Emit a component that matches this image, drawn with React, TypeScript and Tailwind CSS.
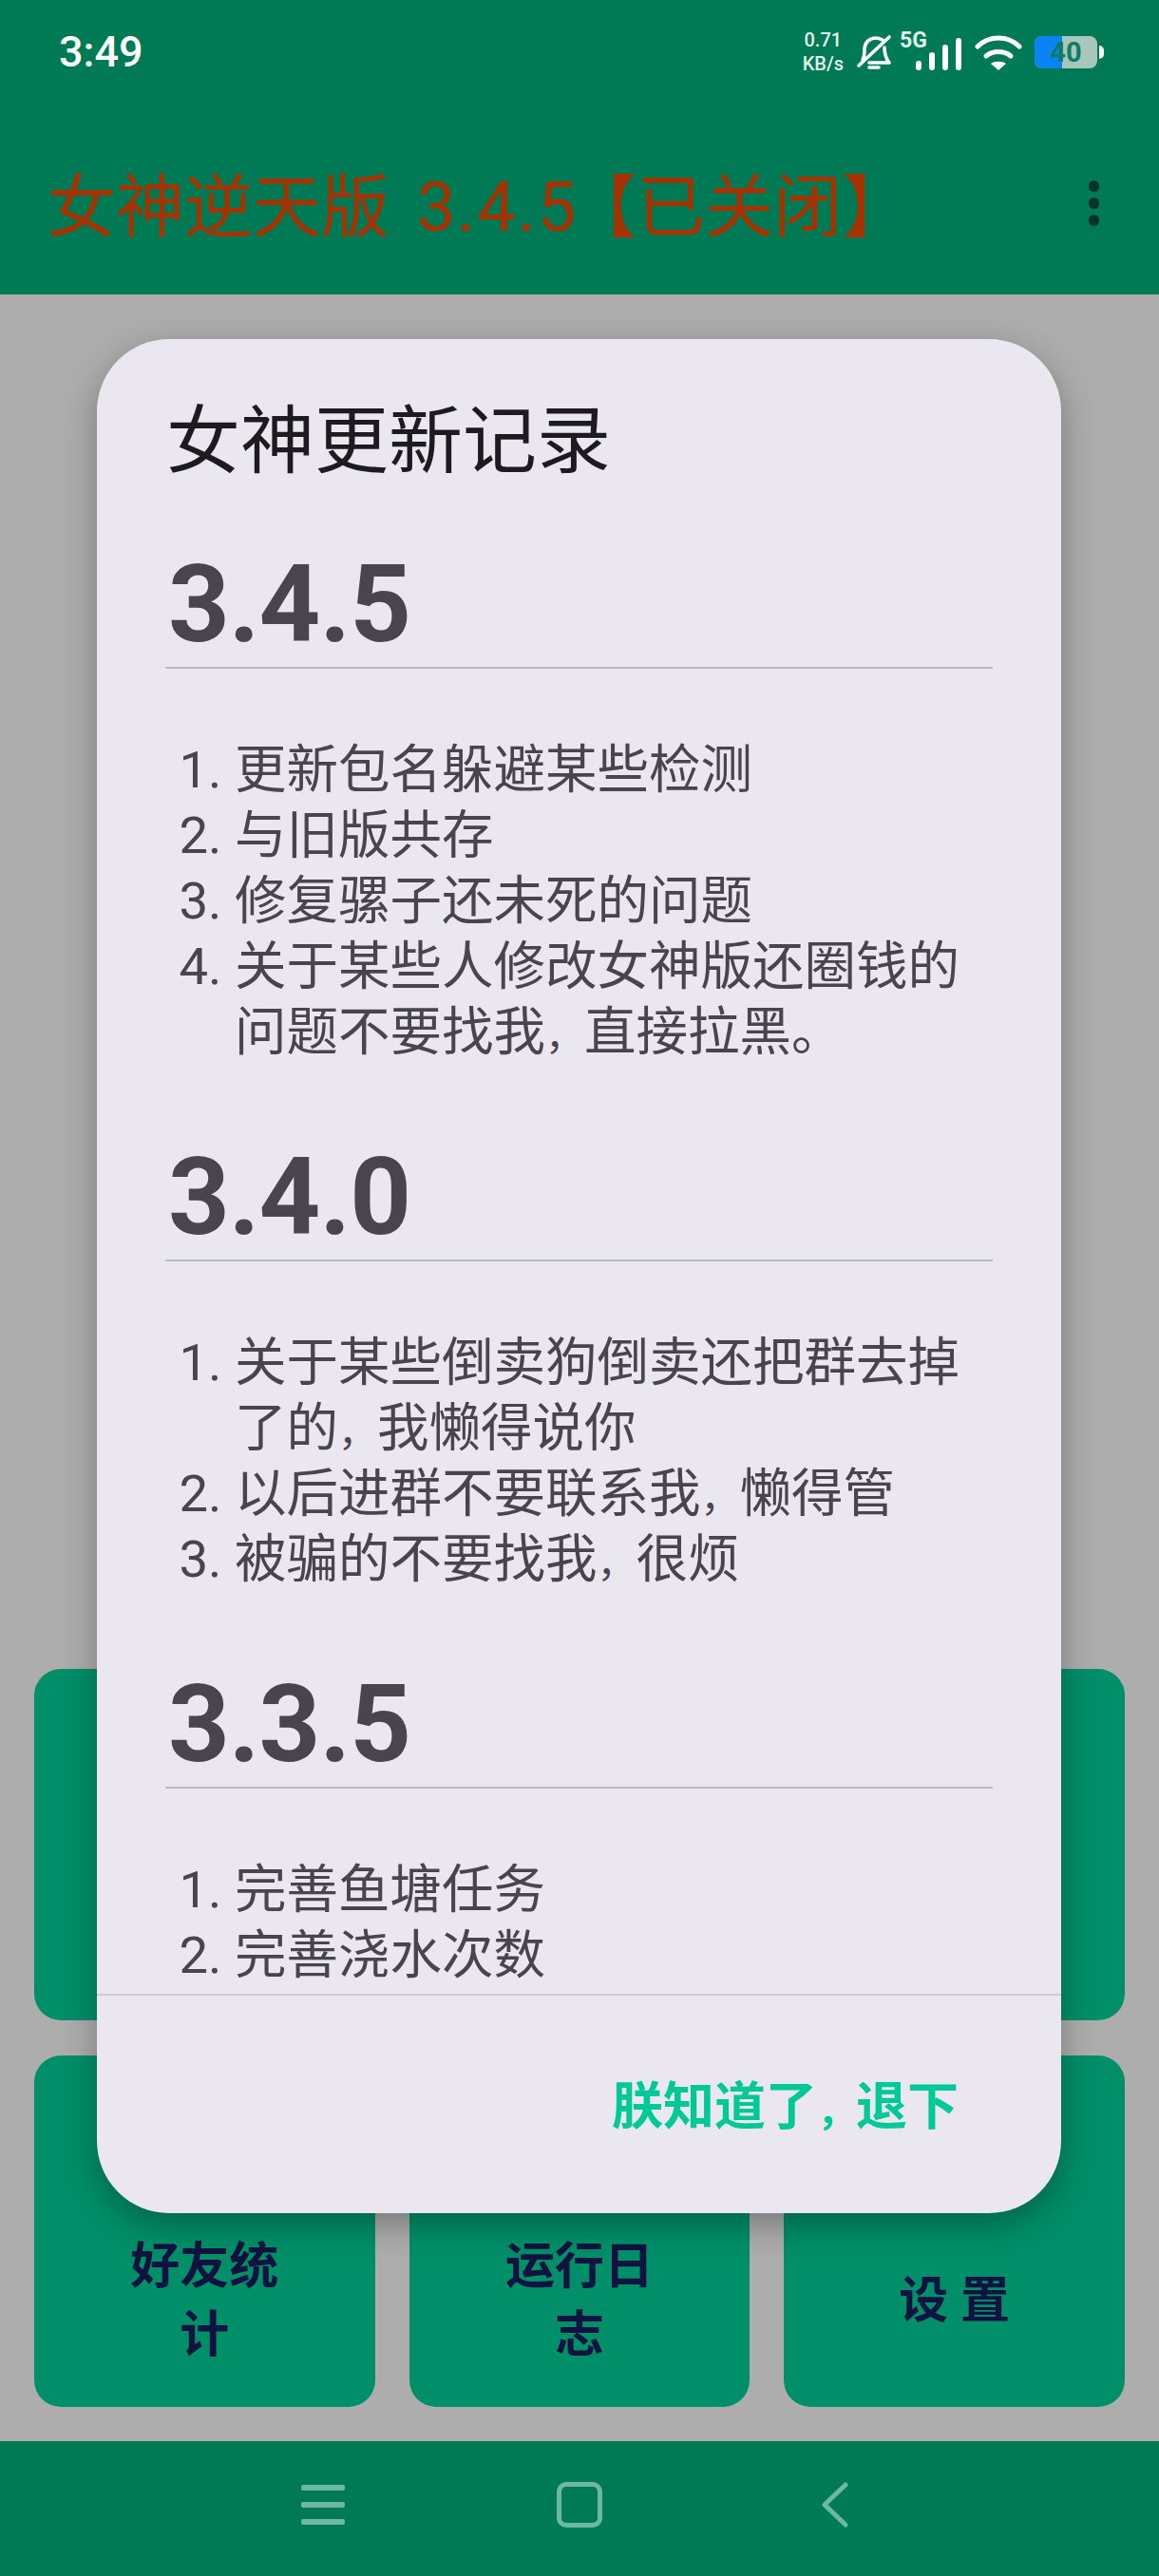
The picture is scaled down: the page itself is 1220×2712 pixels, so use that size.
const cjk = "font-['Roboto','Noto_Sans_CJK_SC',sans-serif]";
const roboto = "font-['Roboto',sans-serif]";

const RELEASES = [
  {
    version: "3.4.5",
    items: ["更新包名躲避某些检测", "与旧版共存", "修复骡子还未死的问题", "关于某些人修改女神版还圈钱的问题不要找我，直接拉黑。"],
  },
  {
    version: "3.4.0",
    items: ["关于某些倒卖狗倒卖还把群去掉了的，我懒得说你", "以后进群不要联系我，懒得管", "被骗的不要找我，很烦"],
  },
  {
    version: "3.3.5",
    items: ["完善鱼塘任务", "完善浇水次数"],
  },
];

// the comma sits in a narrower box than Noto's full-width one
function Commas({ text }: { text: string }) {
  const parts = text.split("，");
  return (
    <>
      {parts.map((p, i) => (
        <span key={i}>
          {p}
          {i < parts.length - 1 && <span className="text-[41px] leading-none">，</span>}
        </span>
      ))}
    </>
  );
}

function StatusBar() {
  return (
    <div className="flex h-[110px] items-center justify-between pl-[62px] pr-[58px] text-white">
      <span className={`${roboto} text-[45px] font-medium`}>3:49</span>
      <div className="flex items-center">
        <div className={`flex flex-col items-center ${roboto} text-[20px] font-medium leading-[25px] text-[#e2f2ec]`}>
          <span>0.71</span>
          <span>KB/s</span>
        </div>
        {/* muted bell */}
        <svg className="ml-[14px]" width="36" height="38" viewBox="0 0 36 38" fill="none" stroke="white" strokeWidth="3.6" strokeLinecap="round" strokeLinejoin="round">
          <path d="M6 27c2-3 2-7 2-11 0-7 5-12 12-12 3 0 5 1 7 2" />
          <path d="M29 14c0 6 1 11 5 16H13" />
          <path d="M13 35h10" />
          <path d="M2 33 34 3" />
        </svg>
        <div className="relative ml-[9px] flex h-[37px] w-[65px] items-end justify-end gap-[8px]">
          <span className={`absolute left-0 top-[-6px] ${roboto} text-[23px] font-bold leading-[24px] text-[#e2f2ec]`}>5G</span>
          <span className="h-[10px] w-[6px] rounded-full bg-white" />
          <span className="h-[19px] w-[6px] rounded-full bg-white" />
          <span className="h-[27px] w-[6px] rounded-full bg-white" />
          <span className="h-[34px] w-[6px] rounded-full bg-white" />
        </div>
        {/* wifi */}
        <svg className="ml-[14px]" width="50" height="37" viewBox="0 0 50 37" fill="none" stroke="white" strokeLinecap="round">
          <path d="M3 12C15 0 35 0 47 12" strokeWidth="5" />
          <path d="M12 22c7-6 19-6 26 0" strokeWidth="5" />
          <path d="M25 37l-8-7c4-3 12-3 16 0z" fill="white" stroke="none" />
        </svg>
        <div className="ml-[13px] flex items-center">
          <div className="relative flex h-[34px] w-[66px] overflow-hidden rounded-[8px] bg-[#a9c6bb]">
            <div className="w-[29px] bg-[#0a84f5]" />
            <span className={`absolute inset-0 text-center ${roboto} text-[29px] font-bold leading-[34px] text-[#0f7a66]`}>40</span>
          </div>
          <div className="ml-[2px] h-[14px] w-[5px] rounded-r-full bg-white" />
        </div>
      </div>
    </div>
  );
}

function AppBar() {
  return (
    <div className="flex h-[200px] items-center justify-between pl-[50px] pr-[63px] pt-[8px]">
      <div className={`mt-[10px] whitespace-nowrap ${cjk} text-[72px] leading-[76px] text-[#a63200]`}>
        女神逆天版 <span className="ml-[11px] mr-[-10px] tracking-[2px]">3.4.5</span>【已关闭】
      </div>
      <div className="flex flex-col gap-[6px]">
        <span className="h-[12px] w-[11px] rounded-full bg-[#04332d]" />
        <span className="h-[12px] w-[11px] rounded-full bg-[#04332d]" />
        <span className="h-[12px] w-[11px] rounded-full bg-[#04332d]" />
      </div>
    </div>
  );
}

function Tile({ lines }: { lines: string[] }) {
  return (
    <div className={`flex h-[370px] flex-col items-center justify-center rounded-[28px] bg-[#008f68] pt-[147px] ${cjk} text-[52px] font-semibold leading-[72px] text-[#10123f]`}>
      {lines.map((l) => (
        <span key={l} className="whitespace-pre">{l}</span>
      ))}
    </div>
  );
}

function NavBar() {
  return (
    <div className="flex h-[142px] items-center justify-center border-t-2 border-[#0a7a58] bg-[#007a55] pb-[10px] pr-[10px]">
      <svg width="46" height="44" viewBox="0 0 46 44" fill="#6db8a0">
        <rect x="0" y="1" width="46" height="6" rx="2" />
        <rect x="0" y="19" width="46" height="6" rx="2" />
        <rect x="0" y="37" width="46" height="6" rx="2" />
      </svg>
      <div className="ml-[223px] h-[48px] w-[48px] rounded-[10px] border-[5px] border-[#6db8a0]" />
      <svg className="ml-[230px]" width="29" height="48" viewBox="0 0 29 48" fill="none" stroke="#6db8a0" strokeWidth="5" strokeLinecap="round" strokeLinejoin="round">
        <path d="M26 3 4 24l22 21" />
      </svg>
    </div>
  );
}

function Release({ version, items }: { version: string; items: string[] }) {
  return (
    <section className="mb-[82px] last:mb-0">
      <div className="mx-[-4px] border-b-2 border-[#bdb8c6] pb-[9px] pl-[3px] pt-[1px]">
        <div className={`${roboto} text-[113px] font-bold leading-[113px] tracking-[-1px] text-[#49454f]`}>{version}</div>
      </div>
      <ol className={`mt-[72px] list-decimal pl-[69px] ${cjk} text-[54.5px] leading-[69px] text-[#49454f]`}>
        {items.map((item) => (
          <li key={item}>
            <Commas text={item} />
          </li>
        ))}
      </ol>
    </section>
  );
}

export default function App() {
  return (
    <div className="relative flex h-[2712px] w-[1220px] flex-col overflow-hidden bg-[#adadad]">
      <header className="bg-[#007a55]">
        <StatusBar />
        <AppBar />
      </header>

      <main className="flex flex-1 flex-col justify-end px-[36px] pb-[36px]">
        <div className="grid grid-cols-3 gap-[36px] gap-y-[37px]">
          <Tile lines={[""]} />
          <Tile lines={[""]} />
          <Tile lines={[""]} />
          <Tile lines={["好友统", "计"]} />
          <Tile lines={["运行日", "志"]} />
          <Tile lines={["设 置"]} />
        </div>
      </main>
      <NavBar />

      {/* dialog */}
      <div className="absolute left-[102px] top-[357px] flex h-[1973px] w-[1015px] flex-col rounded-[76px] bg-[#ebe7f1] shadow-[0_12px_36px_rgba(0,0,0,0.3)]">
        <div className={`mt-[64px] pl-[73px] ${cjk} text-[78px] leading-[90px] text-[#1d1b20]`}>女神更新记录</div>
        <div className="mt-[68px] h-[1522px] border-b-2 border-[#cfcbd6] pl-[76px] pr-[76px]">
          {RELEASES.map((r) => (
            <Release key={r.version} version={r.version} items={r.items} />
          ))}
        </div>
        <div className="flex flex-1 items-center justify-end pr-[108px] pt-[6px]">
          <span className={`${cjk} text-[54px] font-semibold text-[#00c997]`}>
            <Commas text="朕知道了，退下" />
          </span>
        </div>
      </div>
    </div>
  );
}
